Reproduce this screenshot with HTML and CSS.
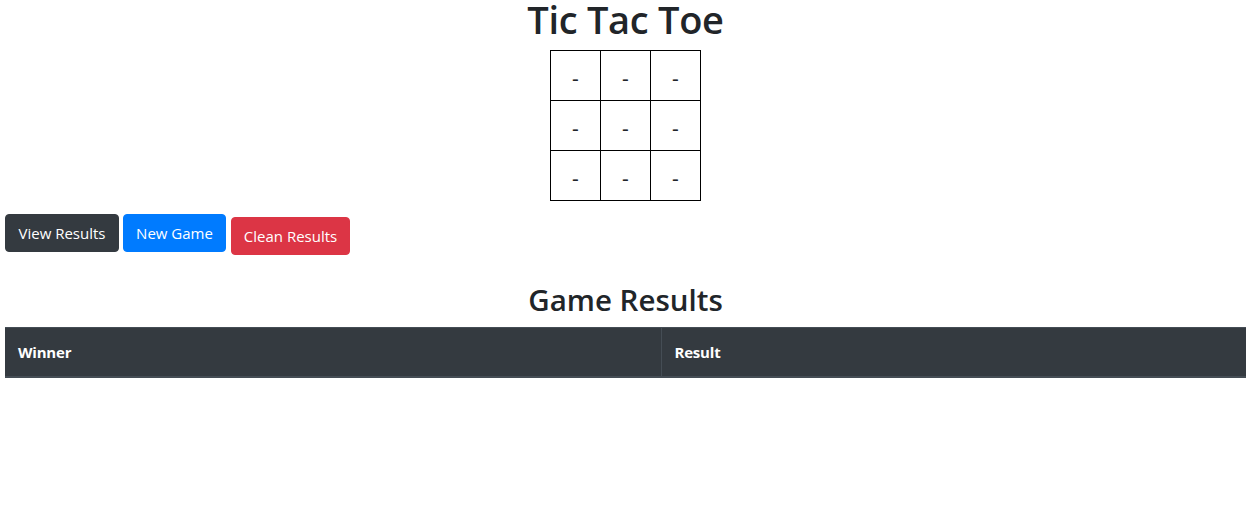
FILE: index.html
```html
<!DOCTYPE html>
<html>
<head>
<meta charset="utf-8">
<title>Tic Tac Toe</title>
<link rel="stylesheet" href="styles.css">
</head>
<body>
<h1 class="title">Tic Tac Toe</h1>
<div class="board">
  <div class="cell">-</div><div class="cell">-</div><div class="cell">-</div>
  <div class="cell">-</div><div class="cell">-</div><div class="cell">-</div>
  <div class="cell">-</div><div class="cell">-</div><div class="cell">-</div>
</div>
<div class="actions">
  <button class="btn btn-dark">View Results</button>
  <button class="btn btn-primary">New Game</button>
  <button class="btn btn-danger">Clean Results</button>
</div>
<h2 class="results-title">Game Results</h2>
<table class="results">
  <thead>
    <tr><th class="col-winner">Winner</th><th class="col-result">Result</th></tr>
  </thead>
  <tbody></tbody>
</table>
</body>
</html>
```
FILE: styles.css
```css
* { box-sizing: border-box; }
html, body { margin: 0; padding: 0; }
body {
  font-family: "Open Sans", "Noto Sans", sans-serif;
  color: #212529;
  background: #fff;
  padding: 0 9px 0 5px;
  font-size: 16px;
  line-height: 1.5;
}
.title {
  margin: 0;
  text-align: center;
  font-size: 38px;
  font-weight: 600;
  line-height: 38px;
  height: 50px;
  padding-bottom: 12px;
  letter-spacing: -0.3px;
}
.board {
  display: grid;
  grid-template-columns: repeat(3, 50px);
  grid-auto-rows: 50px;
  width: 151px;
  margin: 0 auto;
  border-top: 1px solid #000;
  border-left: 1px solid #000;
}
.cell {
  border-right: 1px solid #000;
  border-bottom: 1px solid #000;
  display: flex;
  align-items: center;
  justify-content: center;
  font-size: 21px;
  line-height: 1;
  padding-top: 5px;
}
.actions {
  display: flex;
  align-items: flex-start;
  gap: 4px;
  margin-top: 13px;
}
.btn {
  font-family: inherit;
  font-size: 15px;
  line-height: 24px;
  height: 38px;
  padding: 6px 0;
  border: 1px solid transparent;
  border-radius: 4px;
  color: #fff;
  cursor: pointer;
  white-space: nowrap;
  text-align: center;
}
.btn-dark { background: #343a40; border-color: #343a40; width: 114px; }
.btn-primary { background: #007bff; border-color: #007bff; width: 103px; }
.btn-danger { background: #dc3545; border-color: #dc3545; width: 119px; margin-top: 3px; margin-left: 1px; }
.results-title {
  margin: 26px 0 8px;
  text-align: center;
  font-size: 29.5px;
  font-weight: 600;
  line-height: 38px;
  height: 38px;
}
.results {
  width: 100%;
  border-collapse: collapse;
}
.results th {
  background: #343a40;
  color: #fff;
  text-align: left;
  font-weight: 700;
  font-size: 15px;
  padding: 12px 12px 12px 13px;
  border-top: 1px solid #454d55;
  border-bottom: 2px solid #454d55;
  height: 49px;
  letter-spacing: -0.2px;
}
.results th + th { border-left: 1px solid #454d55; }
.col-winner { width: 656px; }
```
